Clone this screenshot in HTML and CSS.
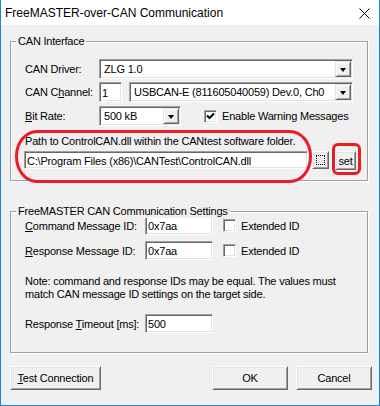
FILE: index.html
```html
<!DOCTYPE html>
<html lang="en">
<head>
  <meta charset="UTF-8" />
  <title>FreeMASTER-over-CAN Communication</title>
  <link rel="stylesheet" href="styles.css">
</head>
<body>
  <div class="window">
    <div class="titlebar">
      <span class="title">FreeMASTER-over-CAN Communication</span>
      <svg class="close" width="11" height="11" viewBox="0 0 11 11">
        <path d="M0.5 0.5 L10.5 10.5 M10.5 0.5 L0.5 10.5" stroke="#000" stroke-width="1" fill="none"/>
      </svg>
    </div>

    <div class="client">
      <div class="group group-can">
        <span class="group-title">CAN Interface</span>

        <div class="row row-driver">
          <span class="lbl lbl-can">CAN Driver:</span>
          <div class="combo w-driver"><span class="combo-text">ZLG 1.0</span><span class="drop"></span></div>
        </div>

        <div class="row row-channel">
          <span class="lbl lbl-can">CAN C<u>h</u>annel:</span>
          <div class="edit w-chan">1</div>
          <div class="combo w-dev"><span class="combo-text">USBCAN-E (811605040059) Dev.0, Ch0</span><span class="drop"></span></div>
        </div>

        <div class="row row-rate">
          <span class="lbl lbl-can"><u>B</u>it Rate:</span>
          <div class="combo w-rate"><span class="combo-text">500 kB</span><span class="drop"></span></div>
          <span class="check check-warn">
            <svg width="9" height="9" viewBox="0 0 9 9"><path d="M1 3.5 L3.5 6 L8 1.5" stroke="#000" stroke-width="2" fill="none"/></svg>
          </span>
          <span class="check-label">Enable Warning Messages</span>
        </div>

        <div class="path-label">Path to ControlCAN.dll within the CANtest software folder.</div>
        <div class="row row-path">
          <div class="edit w-path">C:\Program Files (x86)\CANTest\ControlCAN.dll</div>
          <div class="button btn-browse"><span class="focus"></span></div>
          <div class="button btn-set">set</div>
        </div>
      </div>

      <div class="group group-fm">
        <span class="group-title">FreeMASTER CAN Communication Settings</span>

        <div class="row row-id">
          <span class="lbl lbl-fm"><u>C</u>ommand Message ID:</span>
          <div class="edit w-id">0x7aa</div>
          <span class="check check-ext"></span>
          <span class="check-label">Extended ID</span>
        </div>

        <div class="row row-id row-resp">
          <span class="lbl lbl-fm"><u>R</u>esponse Message ID:</span>
          <div class="edit w-id">0x7aa</div>
          <span class="check check-ext"></span>
          <span class="check-label">Extended ID</span>
        </div>

        <p class="note">Note: command and response IDs may be equal. The values must<br>match CAN message ID settings on the target side.</p>

        <div class="row row-id row-timeout">
          <span class="lbl lbl-fm">Response <u>T</u>imeout [ms]:</span>
          <div class="edit w-id">500</div>
        </div>
      </div>

      <div class="actions">
        <div class="button btn-test"><span><u>T</u>est Connection</span></div>
        <div class="spacer"></div>
        <div class="button btn-dlg">OK</div>
        <div class="button btn-dlg btn-cancel">Cancel</div>
      </div>
    </div>

    <!-- red annotation marks drawn over the dialog -->
    <div class="mark mark-path"></div>
    <div class="mark mark-set"></div>
  </div>
</body>
</html>
```

FILE: styles.css
```css
:root {
  --face: #f0f0f0;
  --light: #e3e3e3;
  --shadow: #a0a0a0;
  --dark: #696969;
  --accent: #1883d7;
  --mark: #ec1c24;
}

body {
  margin: 0;
  background: #fff;
}

.window {
  position: relative;
  width: 380px;
  height: 406px;
  box-sizing: border-box;
  border: 1px solid var(--accent);
  border-top: none;
  background: var(--face);
  font-family: "Liberation Sans", Arial, sans-serif;
  font-size: 11px;
  letter-spacing: -0.2px;
  color: #000;
}

.titlebar {
  height: 25px;
  background: #fff;
  display: flex;
  align-items: center;
  justify-content: space-between;
  padding: 0 9px 0 4px;
}

.title {
  font-size: 12px;
  letter-spacing: 0;
  margin-top: 1px;
}

.close {
  display: block;
  margin-top: 1px;
}

.client {
  padding: 16px 11px 0 9px;
}

/* group boxes */
.group {
  position: relative;
  border: 1px solid var(--shadow);
  box-shadow: inset 1px 1px 0 #fff, 1px 1px 0 #fff;
}

.group-can {
  padding: 17px 0 10px 14px;
}

.group-fm {
  margin-top: 30px;
  padding: 4px 0 19px 14px;
}

.group-title {
  position: absolute;
  top: -7px;
  left: 5px;
  padding: 0 2px;
  line-height: 13px;
  background: var(--face);
}

.row {
  display: flex;
  align-items: center;
  height: 20px;
}

.row-channel {
  margin-top: 3px;
}

.row-rate {
  margin-top: 4px;
}

.lbl-can {
  width: 74px;
}

.lbl-fm {
  width: 120px;
}

/* sunken edit fields */
.edit,
.combo {
  box-sizing: border-box;
  height: 100%;
  background: #fff;
  border: 1px solid;
  border-color: var(--shadow) #fff #fff var(--shadow);
  box-shadow: inset 1px 1px 0 var(--dark), inset -1px -1px 0 var(--light);
}

.edit {
  display: flex;
  align-items: center;
  padding: 1px 1px 0 2px;
  white-space: nowrap;
}

.combo {
  display: flex;
  padding: 1px;
}

.combo-text {
  flex: 1;
  padding: 2px 0 0 3px;
  white-space: nowrap;
}

.drop {
  width: 16px;
  height: 16px;
  box-sizing: border-box;
  display: flex;
  align-items: center;
  justify-content: center;
  background: var(--face);
  border: 1px solid;
  border-color: var(--light) var(--dark) var(--dark) var(--light);
  box-shadow: inset 1px 1px 0 #fff, inset -1px -1px 0 var(--shadow);
}

.drop::after {
  content: "";
  width: 0;
  height: 0;
  border-style: solid;
  border-width: 4px 3.5px 0 3.5px;
  border-color: #000 transparent transparent transparent;
  margin-top: 1px;
}

.w-driver { width: 254px; }
.w-chan { width: 23px; }
.w-dev { width: 224px; margin-left: 7px; }
.w-rate { width: 82px; }
.w-path { width: 284px; height: 18px; }
.w-id { width: 68px; height: 19px; }

/* check boxes */
.check {
  box-sizing: border-box;
  width: 13px;
  height: 13px;
  display: flex;
  align-items: center;
  justify-content: center;
  background: #fff;
  border: 1px solid;
  border-color: var(--shadow) #fff #fff var(--shadow);
  box-shadow: inset 1px 1px 0 var(--dark), inset -1px -1px 0 var(--light);
}

.check svg {
  display: block;
}

.check-warn {
  margin-left: 23px;
}

.check-ext {
  margin-left: 10px;
}

.check-label {
  margin-left: 5px;
}

.path-label {
  margin-top: 9px;
  line-height: 13px;
}

.row-path {
  margin: 3px 0 0 -1px;
  height: 19px;
  align-items: flex-start;
}

/* raised push buttons */
.button {
  box-sizing: border-box;
  display: flex;
  align-items: center;
  justify-content: center;
  background: var(--face);
  border: 1px solid;
  border-color: #fff var(--dark) var(--dark) #fff;
  box-shadow: inset 1px 1px 0 var(--light), inset -1px -1px 0 var(--shadow);
}

.btn-browse {
  width: 17px;
  height: 18px;
  margin-left: 4px;
  padding: 3px;
}

.focus {
  width: 100%;
  height: 100%;
  box-sizing: border-box;
  border: 1px dotted #000;
}

.btn-set {
  width: 21px;
  height: 19px;
  margin-left: 6px;
}

.row-id {
  height: 19px;
}

.row-resp {
  margin-top: 6px;
}

.note {
  margin: 15px 0 0;
  line-height: 13px;
}

.row-timeout {
  margin-top: 13px;
}

.actions {
  display: flex;
  margin: 13px -4px 0 0;
  height: 24px;
}

.spacer {
  flex: 1;
}

.btn-test {
  width: 91px;
}

.btn-dlg {
  width: 76px;
}

.btn-cancel {
  margin-left: 8px;
}

/* red annotation marks */
.mark {
  position: absolute;
  box-sizing: border-box;
  border: 3px solid var(--mark);
}

.mark-path {
  left: 14px;
  top: 130px;
  width: 297px;
  height: 53px;
  border-radius: 22px / 26px;
}

.mark-set {
  left: 331px;
  top: 143px;
  width: 29px;
  height: 32px;
  border-radius: 6px;
}
```
